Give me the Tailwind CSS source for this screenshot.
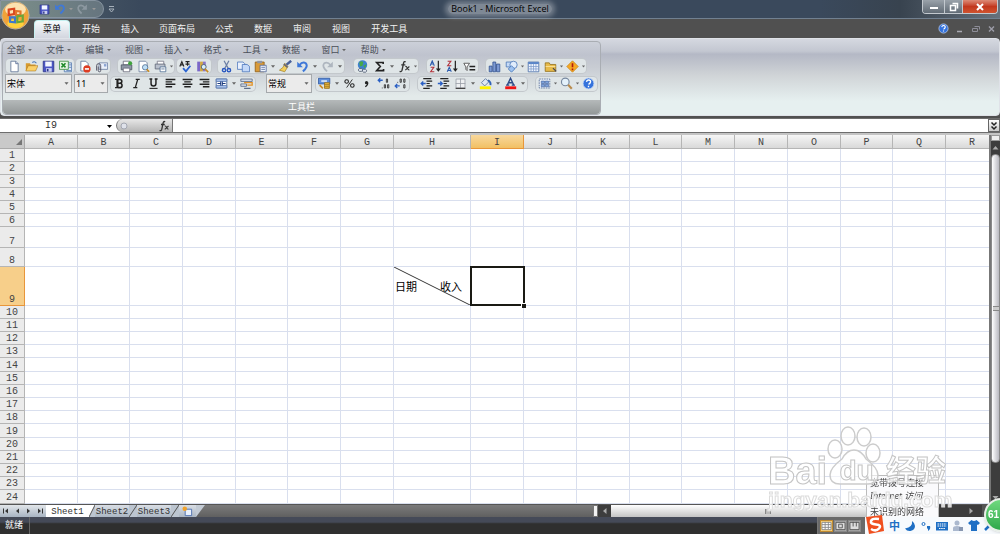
<!DOCTYPE html>
<html lang="zh-CN">
<head>
    <meta charset="UTF-8">
    <meta name="viewport" content="width=device-width, initial-scale=1.0">
    <title>Book1 - Microsoft Excel</title>
    <script src="https://cdn.jsdelivr.net/npm/@tailwindcss/browser@4"></script>
</head>
<body class="flex h-screen flex-col overflow-hidden bg-[#505050] font-['Noto_Sans','Noto_Sans_CJK_SC',sans-serif] text-[9px] leading-[12px] text-[#333]">

    <!-- icon set -->
    <svg class="hidden">
        <symbol id="arrow" viewBox="0 0 8 16"><path d="M1.500 6.500h5L4 9.500z" fill="#666"/></symbol>
        <symbol id="new" viewBox="0 0 16 16"><path d="M3.500 1.500h6l3 3v10h-9z" fill="#fff" stroke="#5b6f92"/><path d="M9.500 1.500v3h3" fill="#cfdaf0" stroke="#5b6f92"/></symbol>
        <symbol id="open" viewBox="0 0 16 16"><path d="M1 4h5l1 1.500h6V13H1z" fill="#d79b2e"/><path d="M4 7h12l-3 6.500H1z" fill="#fbd068" stroke="#a87420" stroke-width=".7"/><path d="M9 3q3-2 5 1" fill="none" stroke="#3f6fb5" stroke-width="1.300"/></symbol>
        <symbol id="save" viewBox="0 0 16 16"><path d="M1.500 1.500h13v13h-13z" fill="#4a55c4" stroke="#2c3486"/><path d="M4 2h8v6H4z" fill="#f2f6ff"/><path d="M5 10h7v4.500H5z" fill="#c9cff0"/><path d="M6 11h2v3H6z" fill="#2c3486"/></symbol>
        <symbol id="xls" viewBox="0 0 16 16"><path d="M6.500 3.500h9v11h-9z" fill="#dbe8fa" stroke="#5377ad"/><path d="M.5 1.500h11v10H.5z" fill="#e6f5e4" stroke="#3b8c3c"/><path d="M3 4l5 5M8 4L3 9" stroke="#1f8a2a" stroke-width="2"/><path d="M12 6h3M12 9h3M9 13h6" stroke="#5377ad"/></symbol>
        <symbol id="perm" viewBox="0 0 16 16"><path d="M3.500 1.500h6l3 3v9h-9z" fill="#fff" stroke="#5b6f92"/><circle cx="11" cy="11" r="4.500" fill="#dd3c22"/><path d="M8.500 11h5" stroke="#fff" stroke-width="2"/></symbol>
        <symbol id="mail" viewBox="0 0 16 16"><path d="M5 3.500h10.500v8H5z" fill="#eaf0fa" stroke="#6c7fa3"/><path d="M11 5h3v3h-3z" fill="#8ba4d0"/><path d="M2 13V7a2.500 2.500 0 015 0v6a1.500 1.500 0 01-3 0V8" fill="none" stroke="#556" stroke-width="1.200"/></symbol>
        <symbol id="print" viewBox="0 0 16 16"><path d="M4 1.500h8V6H4z" fill="#fff" stroke="#667"/><path d="M1.500 6h13v6h-13z" fill="#8f98a6" stroke="#4b5360"/><path d="M4 10h8v4.500H4z" fill="#fff" stroke="#667"/><circle cx="12.500" cy="4" r="2.500" fill="#3fa43c"/></symbol>
        <symbol id="preview" viewBox="0 0 16 16"><path d="M2.500 1.500h8l2 2v11h-10z" fill="#fff" stroke="#6a7c9c"/><circle cx="10" cy="9" r="3.300" fill="#bfe0f7" stroke="#4d6c93"/><path d="M12 11.500l3 3" stroke="#c88a22" stroke-width="2"/></symbol>
        <symbol id="setup" viewBox="0 0 16 16"><path d="M4 1.500h8V6H4z" fill="#fff" stroke="#778"/><path d="M1.500 5h12v6h-12z" fill="#b9c0cc" stroke="#606876"/><path d="M7.500 8.500h7v6h-7z" fill="#fff" stroke="#4d6c93"/><path d="M9 11h4" stroke="#4d6c93"/></symbol>
        <symbol id="spell" viewBox="0 0 16 16"><path d="M1 8l2.500-6L6 8M2 6h3M8 2h5M10.500 2v5M8 5h5" fill="none" stroke="#222" stroke-width="1.400"/><path d="M5 10l3.500 4L14 7" fill="none" stroke="#2a62d0" stroke-width="2.200"/></symbol>
        <symbol id="research" viewBox="0 0 16 16"><path d="M1.500 2h3.500v12H1.500z" fill="#7b68c8"/><path d="M5 2h3.500v12H5z" fill="#d3a742"/><path d="M8.500 2H12v12H8.500z" fill="#8a76c4"/><circle cx="9.500" cy="8.500" r="3" fill="#d9effc" stroke="#456"/><path d="M11 11l4 4" stroke="#c88a22" stroke-width="2"/></symbol>
        <symbol id="cut" viewBox="0 0 16 16"><path d="M5 1l5 9M11 1L6 10" stroke="#6b7fa5" stroke-width="1.500"/><circle cx="5" cy="12.500" r="2" fill="none" stroke="#2b59c0" stroke-width="1.800"/><circle cx="11" cy="12.500" r="2" fill="none" stroke="#2b59c0" stroke-width="1.800"/></symbol>
        <symbol id="copy" viewBox="0 0 16 16"><path d="M.5 2.500h7l2 2v7h-9z" fill="#e9f1fd" stroke="#4c76bd"/><path d="M6.500 5.500h6l3 2.500v6.500h-9z" fill="#c3d8f8" stroke="#4c76bd"/></symbol>
        <symbol id="paste" viewBox="0 0 16 16"><path d="M1.500 2.500h11v12h-11z" fill="#d99a36" stroke="#8f5e18"/><path d="M4 1h6v3H4z" fill="#8e96a5"/><path d="M7.500 6.500h7.500v8H7.500z" fill="#eef4fe" stroke="#52699a"/><path d="M9 9h4.500M9 11.500h4.500" stroke="#52699a"/></symbol>
        <symbol id="brush" viewBox="0 0 16 16"><path d="M15 1L9 6" stroke="#48609a" stroke-width="3"/><path d="M7 4l4 4-4 6.500-6.500-2L5 9z" fill="#f3cf5c" stroke="#9c7a21" stroke-width=".8"/><path d="M6 5l4.500 4" stroke="#667" stroke-width="2"/></symbol>
        <symbol id="undo" viewBox="0 0 16 16"><path d="M1.500 2v7h7z" fill="#3f78d8"/><path d="M4 6.500Q8 1.500 12 4q3.500 4-3.500 10" fill="none" stroke="#3f78d8" stroke-width="2.500"/></symbol>
        <symbol id="redo" viewBox="0 0 16 16"><path d="M14.500 2v7h-7z" fill="#aeb6bf"/><path d="M12 6.500Q8 1.500 4 4 .5 8 7.500 14" fill="none" stroke="#aeb6bf" stroke-width="2.200"/></symbol>
        <symbol id="link" viewBox="0 0 16 16"><circle cx="8" cy="6" r="5.800" fill="#3f82cf"/><path d="M4 3q3-3 5 0l-1 4-3 1zM9 7l4-2-2 5z" fill="#48a848"/><path d="M4 14a2 2 0 010-3.500h3A2 2 0 017 14zM9 15a2 2 0 010-3.500h3a2 2 0 010 3.500z" fill="#dfe5ee" stroke="#4e5a70"/></symbol>
        <symbol id="sum" viewBox="0 0 16 16"><path d="M12.500 5V3H4.500L9 8l-4.500 5H13V11" fill="none" stroke="#222" stroke-width="2"/></symbol>
        <symbol id="fx" viewBox="0 0 16 16"><path d="M9.500 2.500Q7.500 1 6.800 4L5 12.500q-.7 2.500-3 1.500M4 6h5" fill="none" stroke="#333" stroke-width="1.700"/><path d="M9 8q1.500-.5 2.500 2t2.500 2M14 8l-5 4.500" fill="none" stroke="#333" stroke-width="1.400"/></symbol>
        <symbol id="asc" viewBox="0 0 16 16"><path d="M1.500 7L4 1l2.500 6M2.500 5h3" fill="none" stroke="#2d5cae" stroke-width="1.300"/><path d="M2 9h4l-4 5.500h4.500" fill="none" stroke="#b2303a" stroke-width="1.300"/><path d="M11.500 1v11" stroke="#222" stroke-width="1.500"/><path d="M8.500 10.500h6l-3 4z" fill="#222"/></symbol>
        <symbol id="desc" viewBox="0 0 16 16"><path d="M2 1.500h4L2 7h4.500" fill="none" stroke="#b2303a" stroke-width="1.300"/><path d="M1.500 14.500L4 9l2.500 5.500M2.500 13h3" fill="none" stroke="#2d5cae" stroke-width="1.300"/><path d="M11.500 1v11" stroke="#222" stroke-width="1.500"/><path d="M8.500 10.500h6l-3 4z" fill="#222"/></symbol>
        <symbol id="filter" viewBox="0 0 16 16"><path d="M1 4h7L5 8.500V13L3.500 11.500v-3z" fill="#fff" stroke="#444"/><path d="M8 8h7M8 12h7" stroke="#222" stroke-width="2"/></symbol>
        <symbol id="chart" viewBox="0 0 16 16"><path d="M1.500 7.500h3.500v7H1.500zM6 2.500h3.500v12H6zM10.500 5h4v9.500h-4z" fill="#7d9ad4" stroke="#34528f"/></symbol>
        <symbol id="shapes" viewBox="0 0 16 16"><path d="M1.500 2.500h7v6h-7z" fill="#c6dbf7" stroke="#4a76b8"/><circle cx="10.500" cy="6" r="4.500" fill="#e0edfc" stroke="#4a76b8"/><path d="M8 7l4 4-4 4-4-4z" fill="#9dc2f0" stroke="#4a76b8"/></symbol>
        <symbol id="table" viewBox="0 0 16 16"><path d="M1.500 2.500h13v12h-13z" fill="#eef4fd" stroke="#4a6ca8"/><path d="M1.500 2.500h13V5h-13z" fill="#5b86c8"/><path d="M1.500 8h13M1.500 11h13M5 5v9M8 5v9M11 5v9" stroke="#7d9bcb" stroke-width=".9"/></symbol>
        <symbol id="folder" viewBox="0 0 16 16"><path d="M1.500 3.500h5l1 2h7v8.500h-13z" fill="#e7bb4a" stroke="#94711f"/><path d="M2 8h12" stroke="#fbe6a4"/><path d="M11 10l4 4" stroke="#445" stroke-width="1.500"/></symbol>
        <symbol id="warn" viewBox="0 0 16 16"><path d="M8 1l7 7-7 7-7-7z" fill="#f7a823" stroke="#c98a22"/><path d="M8 4v5M8 10.500v2" stroke="#b01a10" stroke-width="2"/></symbol>
        <symbol id="bold" viewBox="0 0 16 16"><path d="M2.500 3H9M2.500 13H9.500" stroke="#222" stroke-width="1.500"/><path d="M5.500 3v10" stroke="#222" stroke-width="2.600"/><path d="M6 3h2.500a2.300 2.300 0 010 4.700H6M8.500 7.700a2.600 2.600 0 010 5.300H6" fill="none" stroke="#222" stroke-width="1.900"/></symbol>
        <symbol id="italic" viewBox="0 0 16 16"><path d="M7 3h5M4 13h5M9.500 3l-3 10" stroke="#222" stroke-width="1.600"/></symbol>
        <symbol id="under" viewBox="0 0 16 16"><path d="M3 2.500h3.500M9.500 2.500H13M5 2.500V8q0 3 3 3t3-3V2.500" fill="none" stroke="#222" stroke-width="1.800"/><path d="M3 14h10" stroke="#222" stroke-width="1.300"/></symbol>
        <symbol id="left" viewBox="0 0 16 16"><path d="M2 3h12M2 6h8M2 9h12M2 12h8" stroke="#222" stroke-width="1.700"/></symbol>
        <symbol id="center" viewBox="0 0 16 16"><path d="M2 3h12M4 6h8M2 9h12M4 12h8" stroke="#222" stroke-width="1.700"/></symbol>
        <symbol id="right" viewBox="0 0 16 16"><path d="M2 3h12M6 6h8M2 9h12M6 12h8" stroke="#222" stroke-width="1.700"/></symbol>
        <symbol id="merge" viewBox="0 0 16 16"><path d="M1.500 2.500h13v11h-13z" fill="#fff" stroke="#3d5b93"/><path d="M1.500 2.500h13v3h-13zM1.500 10.500h13v3h-13z" fill="#a9c2ea" stroke="#5d7bb3"/><path d="M7 5.500v5M9 5.500v5M3 8h4M9 8h4" stroke="#1d3d80" stroke-width="1.300"/></symbol>
        <symbol id="wrap" viewBox="0 0 16 16"><path d="M1 2.500h14v3H1zM1 8.500h7v3H1z" fill="#d3dbe8" stroke="#5d6d88"/><path d="M5 7h10v3H9" fill="none" stroke="#e39226" stroke-width="1.600"/><path d="M5 14h8" stroke="#5d6d88" stroke-width="1.500"/></symbol>
        <symbol id="money" viewBox="0 0 16 16"><path d="M.5 1.500h14v7H.5z" fill="#5f8fdb" stroke="#2c56a0"/><path d="M4 5h7" stroke="#dbe8fb" stroke-width="2"/><path d="M8 7h6v7H8z" fill="#eab840" stroke="#96701c"/><path d="M8 9.500h6M8 12h6" stroke="#96701c"/><path d="M2 10l4 4" stroke="#c88a22" stroke-width="2"/></symbol>
        <symbol id="percent" viewBox="0 0 16 16"><circle cx="4.500" cy="5.500" r="2.200" fill="none" stroke="#222" stroke-width="1.300"/><circle cx="11.500" cy="10.500" r="2.200" fill="none" stroke="#222" stroke-width="1.300"/><path d="M11.500 3l-7 10" stroke="#222" stroke-width="1.100"/></symbol>
        <symbol id="comma" viewBox="0 0 16 16"><circle cx="8" cy="7" r="2" fill="#222"/><path d="M9.500 7q.5 3-3 5" fill="none" stroke="#222" stroke-width="1.500"/></symbol>
        <symbol id="decinc" viewBox="0 0 16 16"><path d="M7 4H2M4 1.500L1.500 4 4 6.500" fill="none" stroke="#2a5fc4" stroke-width="1.600"/><path d="M6.500 13v1M9 9.500h1.500v4H9zM13 9.500h1.500v4H13zM11.500 2.500H13v4h-1.500z" fill="none" stroke="#333" stroke-width="1.100"/></symbol>
        <symbol id="decdec" viewBox="0 0 16 16"><path d="M7 11H2M4 8.500L1.500 11 4 13.500" fill="none" stroke="#2a5fc4" stroke-width="1.600"/><path d="M4.500 6v1M7.500 2.500H9v4H7.500zM12 2.500h1.500v4H12zM12 9.500h1.500v4H12z" fill="none" stroke="#333" stroke-width="1.100"/></symbol>
        <symbol id="outdent" viewBox="0 0 16 16"><path d="M4 2h10M8 5h7M8 8h4M8 11h7M4 14h8" stroke="#222" stroke-width="1.500"/><path d="M7 8H2M4 5.500L1.500 8 4 10.500" fill="none" stroke="#2a5fc4" stroke-width="1.700"/></symbol>
        <symbol id="indent" viewBox="0 0 16 16"><path d="M4 2h10M8 5h7M8 8h4M8 11h7M4 14h8" stroke="#222" stroke-width="1.500"/><path d="M1 8h5M4 5.500L6.500 8 4 10.500" fill="none" stroke="#2a5fc4" stroke-width="1.700"/></symbol>
        <symbol id="borders" viewBox="0 0 16 16"><path d="M2.500 2.500h11v11h-11zM8 2v12M2 8h12" fill="#eef0f2" stroke="#9a9fa8"/><path d="M2 14h12" stroke="#444" stroke-width="1.500"/></symbol>
        <symbol id="fill" viewBox="0 0 16 16"><path d="M3 7l5-5 4 4-5 5z" fill="#dfe8f5" stroke="#556d96"/><path d="M11 4q4 2 3 6" fill="none" stroke="#2f62b5" stroke-width="2.300"/><path d="M1 11.500h13.500V15H1z" fill="#fff200"/></symbol>
        <symbol id="color" viewBox="0 0 16 16"><path d="M4 10l4-8.500L12 10M5.500 7h5M2.500 10h4M9.500 10h4" fill="none" stroke="#2d4a86" stroke-width="1.700"/><path d="M1.500 11.500H15V15H1.500z" fill="#f01414"/></symbol>
        <symbol id="pane" viewBox="0 0 16 16"><path d="M1.500 2.500h13v11h-13z" fill="#eef3fb" stroke="#516a96" stroke-dasharray="2 1"/><path d="M4 5h4v3H4zM9 9h4v3H9zM9 5h4v3H9zM4 9h4v3H4z" fill="#7ea2dc" stroke="#3b5a94" stroke-width=".7"/></symbol>
        <symbol id="zoom" viewBox="0 0 16 16"><circle cx="6.500" cy="6" r="4.700" fill="#e4f1fb" stroke="#76879e" stroke-width="1.400"/><path d="M10 9.500l4.500 5" stroke="#b98a4a" stroke-width="2.500"/></symbol>
        <symbol id="help" viewBox="0 0 16 16"><circle cx="8" cy="8" r="6.700" fill="#3472dc" stroke="#c4d6f5"/><path d="M5.500 6Q6 3.500 8.300 3.700 10.800 4 10.500 6T8 9M8 10.800V12.500" fill="none" stroke="#fff" stroke-width="1.700"/></symbol>
        <symbol id="office" viewBox="0 0 32 32"><circle cx="16" cy="16" r="15" fill="#f0a33a" stroke="#bdb49e"/><ellipse cx="16" cy="9.500" rx="11.500" ry="7.500" fill="#fce2b0"/><ellipse cx="16" cy="25" rx="9" ry="5" fill="#ffd23c"/><g fill="none" stroke-width="2.400"><path d="M8.500 9.500l6-1v6l-6 1z" stroke="#d9451f"/><path d="M16.500 11l5 .5v4h-5z" stroke="#e2742a"/><path d="M10 18h5.500v5.500L10 23z" stroke="#3e78c9"/><path d="M18 17l6-1v6.500l-6 1z" stroke="#6aa53a"/></g></symbol>
    </svg>

    <!-- title bar -->
    <header class="relative flex h-[19px] shrink-0 items-center justify-center border-b border-[#718090] bg-[linear-gradient(90deg,#53636c,#3a495c_14%,#3a495c_82%,#38434f_90%,#66717c)]">
        <div class="absolute top-0 left-0 flex h-[18px] w-[104px] items-center rounded-r-full border border-[#8794a0] bg-linear-to-r from-[#7d908a] to-[#66757f] pl-[35px]">
            <button aria-label="保存" class="w-[16px]"><svg class="mx-auto size-[11px]"><use href="#save"/></svg></button>
            <button aria-label="撤消" class="w-[16px]"><svg class="mx-auto size-[12px]"><use href="#undo"/></svg></button>
            <svg class="h-[12px] w-[6px] invert"><use href="#arrow"/></svg>
            <button aria-label="恢复" class="w-[16px] opacity-50"><svg class="mx-auto size-[12px]"><use href="#redo"/></svg></button>
            <svg class="h-[12px] w-[8px] invert"><use href="#arrow"/></svg>
        </div>
        <button aria-label="自定义快速访问工具栏" class="absolute top-[3px] left-[108px]"><svg class="h-[12px] w-[7px]" viewBox="0 0 7 12"><path d="M1 3.500h5" stroke="#a6b0ba"/><path d="M1 6h5L3.500 9z" stroke="#a6b0ba" fill="none"/></svg></button>
        <button aria-label="Office 按钮" class="absolute top-[1px] left-[1px] z-10"><svg class="size-[29px]"><use href="#office"/></svg></button>
        <h1 class="rounded-full bg-white/35 px-[3px] font-['Open_Sans',sans-serif] text-[9px] leading-[10px] text-black shadow-[0_0_5px_3px_rgba(255,255,255,.3)]">Book1 - Microsoft Excel</h1>
        <div class="absolute top-0 right-[2px] flex h-[14px] overflow-hidden rounded-b border border-t-0 border-[#c3c9cf]">
            <button aria-label="最小化" class="w-[21px] bg-linear-to-b from-[#9aa2aa] to-[#626c76]"><svg class="mx-auto h-[12px] w-[10px]" viewBox="0 0 10 12"><path d="M1 6h8v2H1z" fill="#fff"/></svg></button>
            <button aria-label="还原" class="w-[19px] border-x border-[#c3c9cf] bg-linear-to-b from-[#9aa2aa] to-[#626c76]"><svg class="mx-auto h-[12px] w-[10px]" viewBox="0 0 10 12"><path d="M3.500 2.500h5v5M1.500 4.500h5v5h-5z" fill="none" stroke="#fff" stroke-width="1.500"/></svg></button>
            <button aria-label="关闭" class="w-[34px] bg-linear-to-b from-[#dc8a76] via-[#c2371d] to-[#d0532f]"><svg class="mx-auto h-[12px] w-[10px]" viewBox="0 0 10 12"><path d="M2 3l6 6M8 3l-6 6" stroke="#fff" stroke-width="2"/></svg></button>
        </div>
    </header>

    <!-- ribbon tabs -->
    <nav class="flex h-[19px] shrink-0 items-end bg-[#505050] pl-[34px] text-[#f2f2f2]">
        <a href="#" class="h-[18px] rounded-t border border-[#c5f0f0] border-b-0 bg-linear-to-b from-[#f5fafc] to-[#d3d6df] px-[8px] leading-[16px] text-black">菜单</a>
        <a href="#" class="ml-[2px] px-[10px] leading-[18px]">开始</a>
        <a href="#" class="px-[11px] leading-[18px]">插入</a>
        <a href="#" class="px-[9px] leading-[18px]">页面布局</a>
        <a href="#" class="px-[11px] leading-[18px]">公式</a>
        <a href="#" class="px-[10px] leading-[18px]">数据</a>
        <a href="#" class="px-[11px] leading-[18px]">审阅</a>
        <a href="#" class="px-[10px] leading-[18px]">视图</a>
        <a href="#" class="px-[11px] leading-[18px]">开发工具</a>
        <div class="mr-[3px] ml-auto flex h-[19px] items-center gap-[6px]">
            <button aria-label="帮助"><svg class="size-[11px]"><use href="#help"/></svg></button>
            <button aria-label="最小化窗口"><svg class="size-[10px]" viewBox="0 0 10 10"><path d="M2 7.500h5" stroke="#a9a9b2" stroke-width="1.500"/></svg></button>
            <button aria-label="还原窗口"><svg class="size-[10px]" viewBox="0 0 10 10"><path d="M3.500 2.500h5v3M1.500 4.500h5v3h-5z" fill="none" stroke="#8d8d98"/></svg></button>
            <button aria-label="关闭窗口"><svg class="size-[10px]" viewBox="0 0 10 10"><path d="M2 2.500l5 5M7 2.500l-5 5" stroke="#9d9da8" stroke-width="1.400"/></svg></button>
        </div>
    </nav>

    <!-- ribbon -->
    <section class="h-[78px] shrink-0 rounded border border-[#dfe2e8] bg-[linear-gradient(180deg,#d5d8e0,#c3c7d1_16%,#b4b8c5_20%,#d0d4d7_48%,#e6f0f0_82%)] px-[1px] pt-[2px]">
        <div class="flex h-[74px] w-[599px] flex-col rounded-sm border border-[#a9adb3] bg-[linear-gradient(180deg,#ccd0d9,#bfc3ce_18%,#c8ccd3_35%,#e3eaea_75%)]">
            <div id="menus" class="grid h-[16px] w-[397px] shrink-0 grid-cols-10 items-center pl-[4px] text-[#4a4e58]"></div>
            <div class="flex h-[16px] items-center pl-[3px]" id="bar1"></div>
            <div class="flex h-[19px] items-center pl-[2px]" id="bar2"></div>
            <h2 class="mt-auto h-[14px] rounded-b-sm bg-linear-to-b from-[#b5b9ba] to-[#939898] text-center text-[9px] leading-[13px] font-normal text-white">工具栏</h2>
        </div>
    </section>

    <!-- formula bar -->
    <div class="mt-[2px] flex h-[15px] shrink-0 border-y border-[#6d6d6d] bg-white">
        <input id="namebox" aria-label="名称框" value="I9" class="w-[102px] text-center font-['Liberation_Mono',monospace] text-[10px] leading-[12px]">
        <button aria-label="名称列表" class="w-[14px]"><svg class="mx-auto h-[12px] w-[7px]" viewBox="0 0 7 12"><path d="M1 5h5L3.500 8z" fill="#000"/></svg></button>
        <button aria-label="插入函数" class="flex w-[57px] items-center justify-between rounded-l-full border border-y-0 border-[#777] bg-linear-to-b from-[#e8e8e8] to-[#b5b5b5] pr-[2px] pl-[3px]">
            <svg class="size-[8px]" viewBox="0 0 8 8"><circle cx="4" cy="4" r="3" fill="#dfe2ea" stroke="#a3a7b2"/></svg>
            <svg class="size-[12px]"><use href="#fx"/></svg>
        </button>
        <input aria-label="编辑栏" class="min-w-0 flex-1">
        <button aria-label="展开编辑栏" class="w-[12px] border border-[#666] bg-linear-to-b from-white to-[#c9c9c9]"><svg class="mx-auto h-[10px] w-[8px]" viewBox="0 0 8 10"><path d="M1.500 1.500L4 4l2.500-2.500M1.500 5.500L4 8l2.500-2.500" fill="none" stroke="#222" stroke-width="1.500"/></svg></button>
    </div>

    <!-- worksheet -->
    <main class="flex min-h-0 flex-1 border-t-2 border-[#c4c4c4] bg-white">
        <div class="min-w-0 flex-1 overflow-hidden">
            <table class="w-[999px] table-fixed border-separate border-spacing-0 font-['Liberation_Mono',monospace] text-[10px] leading-[10px] text-[#444]">
                <thead><tr id="cols" class="h-[14px]"></tr></thead>
                <tbody id="rows"></tbody>
            </table>
        </div>
        <div class="flex w-[11px] shrink-0 flex-col border-l-2 border-[#777] bg-[#3d3d3d]">
            <div class="h-[6px] border border-[#999] bg-[#eee]"></div>
            <button aria-label="向上滚动" class="h-[13px] bg-[#3d3d3d]"><svg class="mx-auto h-[10px] w-[7px]" viewBox="0 0 7 10"><path d="M.5 6.500h6L3.500 3z" fill="#aaa"/></svg></button>
            <div class="flex h-[309px] items-center justify-center rounded-sm border border-[#8a8a8a] bg-linear-to-r from-white to-[#b9b9c0]">
                <div class="h-[5px] w-[6px] border-y border-[#888] bg-[#ccc]"></div>
            </div>
            <button aria-label="向下滚动" class="mt-auto h-[12px]"><svg class="mx-auto h-[10px] w-[7px]" viewBox="0 0 7 10"><path d="M.5 3h6L3.500 6.500z" fill="#aaa"/></svg></button>
        </div>
    </main>

    <!-- sheet tabs -->
    <div class="flex h-[13px] shrink-0 items-stretch border-t border-[#555] bg-linear-to-b from-[#7b7b7b] to-[#606060]">
        <div class="flex w-[46px] items-center justify-around bg-linear-to-b from-[#e2e6ea] to-[#a8b4c2]">
            <button aria-label="第一张"><svg class="size-[8px]" viewBox="0 0 8 8"><path d="M1 1.500h1v5H1zM6 1.500v5L3 4z" fill="#333"/></svg></button>
            <button aria-label="上一张"><svg class="size-[8px]" viewBox="0 0 8 8"><path d="M6 1.500v5L3 4z" fill="#333"/></svg></button>
            <button aria-label="下一张"><svg class="size-[8px]" viewBox="0 0 8 8"><path d="M2 1.500v5L5 4z" fill="#333"/></svg></button>
            <button aria-label="最后一张"><svg class="size-[8px]" viewBox="0 0 8 8"><path d="M2 1.500v5L5 4zM6 1.500h1v5H6z" fill="#333"/></svg></button>
        </div>
        <div class="flex font-['Liberation_Mono',monospace] text-[9px] leading-[14px] text-[#333]">
            <button class="w-[43px] bg-white text-center">Sheet1</button>
            <svg class="h-[12px] w-[6px] bg-[#bcc5d0]" viewBox="0 0 6 12" preserveAspectRatio="none"><path d="M0 0h6L0 12z" fill="#fff"/><path d="M6 0L0 12" stroke="#555"/></svg>
            <button class="w-[34px] bg-linear-to-b from-[#d9dee5] to-[#abb6c3] text-center">Sheet2</button>
            <svg class="h-[12px] w-[8px] bg-[#bcc5d0]" viewBox="0 0 8 12" preserveAspectRatio="none"><path d="M8 0L0 12" stroke="#555"/></svg>
            <button class="w-[34px] bg-linear-to-b from-[#d9dee5] to-[#abb6c3] text-center">Sheet3</button>
            <svg class="h-[12px] w-[8px] bg-[#bcc5d0]" viewBox="0 0 8 12" preserveAspectRatio="none"><path d="M8 0L0 12" stroke="#555"/></svg>
            <button aria-label="插入工作表" class="w-[17px] bg-linear-to-b from-[#d9dee5] to-[#abb6c3]"><svg class="mx-auto size-[11px]" viewBox="0 0 12 12"><path d="M3.500 3.500h7v7h-7z" fill="#eaf1fc" stroke="#4d6fae"/><circle cx="3" cy="3" r="2.500" fill="#f1a32c"/></svg></button>
            <svg class="h-[12px] w-[9px]" viewBox="0 0 9 12" preserveAspectRatio="none"><path d="M0 0h9L0 12z" fill="#c3cbd5"/></svg>
        </div>
        <div class="ml-auto flex w-[407px]">
            <div class="w-[5px] border border-[#777] bg-[#f2f2f2]"></div>
            <button aria-label="向左滚动" class="w-[13px] bg-[#3d3d3d]"><svg class="mx-auto size-[8px]" viewBox="0 0 8 8"><path d="M5.500 1v6L2 4z" fill="#aaa"/></svg></button>
            <div class="flex w-[314px] items-center justify-center bg-linear-to-b from-white to-[#c4c4c4]"><div class="h-[5px] w-[6px] border-x border-[#888] bg-[#bbb]"></div></div>
            <button aria-label="向右滚动" class="flex flex-1 items-center justify-end bg-[#3d3d3d] pr-[7px]"><svg class="size-[8px]" viewBox="0 0 8 8"><path d="M2.500 1v6L6 4z" fill="#aaa"/></svg></button>
            <div class="w-[18px] bg-[#555]"></div>
        </div>
    </div>

    <!-- status bar -->
    <footer class="flex h-[17px] shrink-0 items-stretch bg-linear-to-b from-[#454a58] from-30% to-[#2f2f2f] to-40% text-white">
        <span class="w-[30px] border-r border-[#666] pl-[5px] leading-[16px]">就绪</span>
        <div class="ml-auto flex w-[48px] items-center gap-[1px] border-l border-[#777] bg-[#6a6a6a] pl-[2px]">
            <button aria-label="普通视图" class="border border-[#c08a30] bg-[#f8d07a]"><svg class="h-[10px] w-[11px]" viewBox="0 0 12 11"><path d="M1 1.500h10v8H1zM1 4h10M1 7h10M4.500 1v8M8 1v8" fill="#fff" stroke="#888"/></svg></button>
            <button aria-label="页面布局视图" class="border border-[#888] bg-[#aaa]"><svg class="h-[10px] w-[11px]" viewBox="0 0 12 11"><path d="M1 1.500h10v8H1zM4 3.500h4v4H4z" fill="#ddd" stroke="#555"/></svg></button>
            <button aria-label="分页预览" class="border border-[#888] bg-[#aaa]"><svg class="h-[10px] w-[11px]" viewBox="0 0 12 11"><path d="M1 1.500h10v8H1zM4.500 1v5M8 1v5" fill="#ddd" stroke="#555"/></svg></button>
        </div>
        <!-- input method bar -->
        <div class="z-10 flex w-[135px] items-center gap-[4px] bg-[#f7fafd] text-[#1f6fc4]">
            <svg class="-mt-[2px] h-[19px] w-[20px] shrink-0" viewBox="0 0 20 19"><path d="M1 2L17 0l2 16-15 3z" fill="#f0501f"/><path d="M14 4Q7 3 6 6t5 3.500 3 4T6 14" fill="none" stroke="#fff" stroke-width="2.500"/></svg>
            <span class="text-[11px] leading-[13px] font-bold">中</span>
            <svg class="size-[12px] shrink-0" viewBox="0 0 12 12"><path d="M8 1q1 6-7 7.500 2 3 5.500 2.500Q11 10 11 6 11 3 8 1z" fill="currentColor"/></svg>
            <svg class="size-[12px] shrink-0" viewBox="0 0 12 12"><circle cx="3.500" cy="4" r="1.500" fill="none" stroke="currentColor"/><path d="M7 6h3q1 3-2 5 .5-2-1-3z" fill="currentColor"/></svg>
            <svg class="h-[10px] w-[12px] shrink-0" viewBox="0 0 12 10"><path d="M0 1h12v8.500H0z" fill="currentColor"/><path d="M1.500 3h9M1.500 5h9M3 7.500h6" stroke="#fff" stroke-dasharray="1.500 .7"/></svg>
            <svg class="size-[12px] shrink-0" viewBox="0 0 12 12"><circle cx="5" cy="3" r="2.500" fill="#aab8ce"/><path d="M1 11V8q0-2 4-2t4 2v3z" fill="#aab8ce"/><path d="M7 7h4v4H7z" fill="#8796b0"/></svg>
            <svg class="h-[11px] w-[12px] shrink-0" viewBox="0 0 12 11"><path d="M3.500 0Q6 2 8.500 0L12 3l-2 2-1-.5V11H3V4.500L2 5 0 3z" fill="currentColor"/></svg>
            <svg class="size-[10px] shrink-0" viewBox="0 0 10 10"><path d="M1 9l6-6" stroke="currentColor" stroke-width="2.500"/></svg>
        </div>
    </footer>

    <!-- network tooltip -->
    <div class="fixed right-[61px] bottom-[17px] h-[42px] w-[73px] border border-b-0 border-[#bbb] bg-[#fafafc] pl-[3px] text-[9px] leading-[13px] text-[#444]">
        <p>宽带拨号连接</p>
        <p class="italic">Internet 访问</p>
        <p class="mt-[4px] leading-[12px]">未识别的网络</p>
    </div>

    <!-- watermark -->
    <div class="pointer-events-none fixed right-[54px] bottom-[24px] flex h-[84px] w-[178px] flex-col justify-end font-['Liberation_Sans','Noto_Sans_CJK_SC',sans-serif] font-bold text-white/80">
        <svg class="absolute top-[0px] left-[59px] h-[62px] w-[54px]" viewBox="0 0 54 62"><g fill="#fff" fill-opacity=".6" stroke="#ccc" stroke-width="1.500"><ellipse cx="8" cy="23" rx="7" ry="9"/><ellipse cx="21" cy="10" rx="7" ry="9"/><ellipse cx="37" cy="11" rx="7" ry="9"/><ellipse cx="46" cy="27" rx="7" ry="9"/><path d="M27 24q7 0 12 9 12 9 12 16 0 9-10 9H13q-10 0-10-9 0-7 12-16 5-9 12-9z"/></g></svg>
        <div class="relative flex items-center justify-between text-[38px] leading-[38px] [-webkit-text-stroke:1px_#c4c4c4]">
            <span>Bai</span><span class="text-[28px]">du</span><span class="text-[30px]">经验</span>
        </div>
        <div class="relative text-[21px] leading-[20px] whitespace-nowrap [-webkit-text-stroke:1px_#dcdcdc]">jingyan.baidu.com</div>
    </div>

    <!-- floating speed ball -->
    <button class="fixed right-[-18px] bottom-[2px] z-20 size-[34px] rounded-full border-2 border-[#e8efe8] bg-linear-to-b from-[#6fd97f] to-[#2ca84a] pl-[2px] text-left font-['Liberation_Sans',sans-serif] text-[10px] font-bold text-white shadow">61</button>

    <script>
        const menus = ['全部', '文件', '编辑', '视图', '插入', '格式', '工具', '数据', '窗口', '帮助'];
        document.getElementById('menus').innerHTML = menus.map(m =>
            `<button class="flex items-center gap-[2px]">${m}<svg class="h-[12px] w-[6px]"><use href="#arrow"/></svg></button>`
        ).join('');

        // '>' is a drop-down arrow, '.' a narrow one
        function group(margin, items) {
            const inner = items.split(' ').map(i => {
                if (i === '>') return '<svg class="h-[13px] w-[8px]"><use href="#arrow"/></svg>';
                if (i === '.') return '<svg class="h-[13px] w-[5px]"><use href="#arrow"/></svg>';
                return `<button aria-label="${i}" class="w-[17px]"><svg class="mx-auto size-[13px]"><use href="#${i}"/></svg></button>`;
            }).join('');
            return `<div class="${margin} flex h-[14px] shrink-0 items-center rounded-sm bg-[#dfe5e7] shadow-[0_0_0_1px_#c3c8cc]">${inner}</div>`;
        }

        function combo(margin, label, value) {
            return `<div class="${margin} relative h-[19px] shrink-0">
                <select aria-label="${label}" class="h-[19px] w-full appearance-none border border-[#a5a9ac] bg-[#ebebeb] pl-[1px] text-[9px] leading-[16px] text-black"><option>${value}</option></select>
                <svg class="pointer-events-none absolute top-[3px] right-[2px] h-[13px] w-[7px]"><use href="#arrow"/></svg>
            </div>`;
        }

        document.getElementById('bar1').innerHTML =
            group('ml-0', 'new open save xls') +
            group('ml-[2px]', 'perm mail') +
            group('ml-[8px]', 'print preview setup .') +
            group('ml-[3px]', 'spell research') +
            group('ml-[7px]', 'cut copy paste > brush undo > redo >') +
            group('ml-[10px]', 'link sum > fx .') +
            group('ml-[9px]', 'asc desc filter') +
            group('ml-[8px]', 'chart shapes . table folder . warn .');

        document.getElementById('bar2').innerHTML =
            combo('w-[67px]', '字体', '宋体') +
            combo('ml-[2px] w-[34px]', '字号', '11') +
            group('ml-[3px]', 'bold italic under left center right merge > wrap') +
            combo('ml-[11px] w-[46px]', '数字格式', '常规') +
            group('ml-[4px]', 'money > percent comma decinc decdec') +
            group('ml-[9px]', 'outdent indent borders > fill > color >') +
            group('ml-[9px]', 'pane . zoom . help');

        const letters = 'ABCDEFGHIJKLMNOPQR'.split('');
        const wide = 'w-[53px]', slim = 'w-[52px]';
        const widths = [wide, slim, wide, wide, slim, wide, wide, 'w-[77px]', wide, wide, wide, slim, wide, wide, wide, slim, wide, wide];
        document.getElementById('cols').innerHTML =
            `<th class="w-[25px] border-r border-b border-[#a9a9a9] bg-[#c9c9c9] p-0"><svg class="ml-auto h-[10px] w-[10px]" viewBox="0 0 10 10"><path d="M8 2v6H2z" fill="#777"/></svg></th>` +
            letters.map((l, i) => {
                const look = l === 'I' ? 'border-[#e8963a] bg-linear-to-b from-[#f8d89c] to-[#f2c062]' : 'border-[#b5b5b5] bg-linear-to-b from-[#f6f6f6] to-[#d9d9d9]';
                return `<th class="${widths[i]} ${look} border-r border-b p-0 pt-[2px] font-normal">${l}</th>`;
            }).join('');

        const heights = { 7: 'h-[21px]', 8: 'h-[19px]', 9: 'h-[39px]', 14: 'h-[14px]', 19: 'h-[14px]', 24: 'h-[14px]' };
        const diagonal = `<div class="relative flex h-[38px] items-center justify-between pr-[8px] pl-[1px] font-['Noto_Sans_CJK_SC',sans-serif] text-[11px] text-black">
            <svg class="absolute inset-0 h-full w-full" viewBox="0 0 77 39" preserveAspectRatio="none"><path d="M0 0l77 39" stroke="#333"/></svg>
            <span>日期</span><span>收入</span></div>`;
        const cursor = `<div class="relative h-[38px]"><div class="absolute -top-[1px] -right-[2px] -bottom-[1px] -left-[1px] border-2 border-[#1a1a14]"></div><div class="absolute -right-[3px] -bottom-[3px] size-[5px] border-t border-l border-white bg-[#1a1a14]"></div></div>`;
        let html = '';
        for (let r = 1; r <= 24; r++) {
            const head = r === 9 ? 'border-[#e8963a] bg-[#f7cf8a]' : 'border-[#b5b5b5] bg-[#ebebeb]';
            html += `<tr class="${heights[r] || 'h-[13px]'}"><th class="${head} border-r border-b p-0 align-bottom font-normal">${r}</th>`;
            letters.forEach(l => {
                const content = r === 9 && l === 'H' ? diagonal : r === 9 && l === 'I' ? cursor : '';
                html += `<td class="border-r border-b border-[#d9dfee] p-0">${content}</td>`;
            });
            html += '</tr>';
        }
        document.getElementById('rows').innerHTML = html;
    </script>
</body>
</html>
